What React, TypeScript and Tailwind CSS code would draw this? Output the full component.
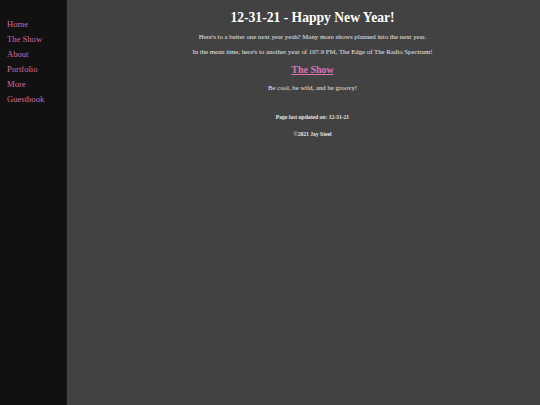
import React from "react";

const links = ["Home", "The Show", "About", "Portfolio", "More", "Guestbook"];

export default function App() {
  return (
    <div className="flex h-[405px] w-[540px] overflow-hidden bg-[#424242] font-['Liberation_Serif','Times_New_Roman',serif]">
      <nav className="w-[67px] shrink-0 bg-[#111111] border-r border-[#1a1a1a] pt-[19px] pl-[7px]">
        <ul className="flex flex-col gap-[3.5px]">
          {links.map((l) => (
            <li key={l} className="font-['Liberation_Serif',serif] text-[8.6px] leading-[11.5px] text-[#cc6aa6]">{l}</li>
          ))}
        </ul>
      </nav>
      <main className="flex-1 flex flex-col items-center pl-[18px] text-[#e6e6e6]">
        <h1 className="mt-[10px] text-[13.6px] leading-[16px] font-bold text-white">12-31-21 - Happy New Year!</h1>
        <p className="mt-[7px] text-[6.8px] leading-[8px]">Here's to a better one next year yeah? Many more shows planned into the next year.</p>
        <p className="mt-[7px] text-[6.8px] leading-[8px]">In the mean time, here's to another year of 107.9 FM, The Edge of The Radio Spectrum!</p>
        <a className="mt-[8px] text-[10px] leading-[12px] font-bold underline text-[#dc72b4]">The Show</a>
        <p className="mt-[8px] text-[6.8px] leading-[8px]">Be cool, be wild, and be groovy!</p>
        <p className="mt-[22px] text-[5.6px] leading-[6px] font-bold">Page last updated on: 12-31-21</p>
        <p className="mt-[11px] text-[5.6px] leading-[6px] font-bold">©2021 Jay Steel</p>
      </main>
    </div>
  );
}
